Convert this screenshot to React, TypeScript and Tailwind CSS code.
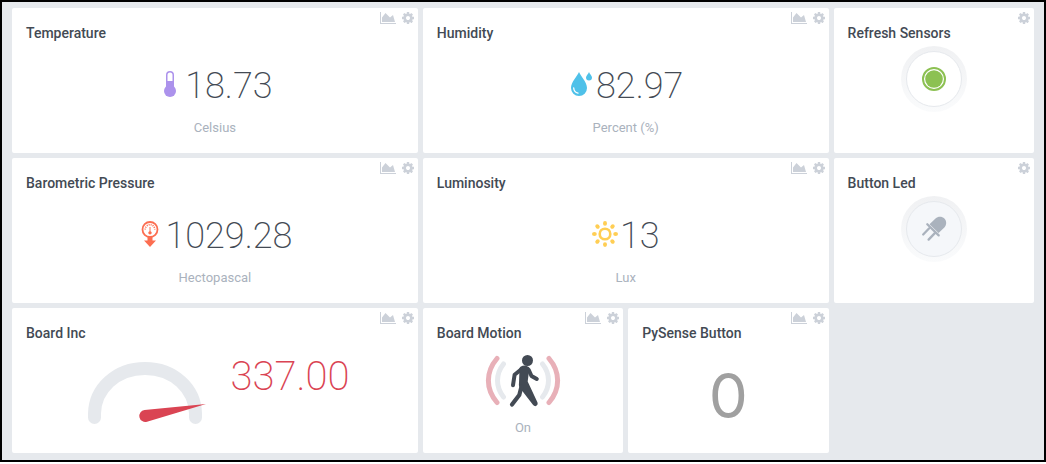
import type { ReactNode } from "react";

function AreaChartIcon() {
  return (
    <svg viewBox="0 128 2048 1536" className="h-3 w-4" fill="currentColor" aria-hidden="true">
      <path d="M2048 1536v128h-2048v-1536h128v1408h1920zM1664 512l256 896h-1664v-576l448-576 576 576z" />
    </svg>
  );
}

function CogIcon() {
  return (
    <svg viewBox="128 128 1536 1536" className="h-3 w-3" fill="currentColor" aria-hidden="true">
      <path d="M1152 896q0-106-75-181t-181-75-181 75-75 181 75 181 181 75 181-75 75-181zm512-109v222q0 12-8 23t-20 13l-185 28q-19 54-39 91 35 50 107 138 10 12 10 25t-9 23q-27 37-99 108t-94 71q-12 0-26-9l-138-108q-44 23-91 38-16 136-29 186-7 28-36 28h-222q-14 0-24.5-8.5t-11.5-21.5l-28-184q-49-16-90-37l-141 107q-10 9-25 9-14 0-25-11-126-114-165-168-7-10-7-23 0-12 8-23 15-21 51-66.5t54-70.5q-27-50-41-99l-183-27q-13-2-21-12.5t-8-23.5v-222q0-12 8-23t19-13l186-28q14-46 39-92-40-57-107-138-10-12-10-24 0-10 9-23 26-36 98.5-107.5t94.5-71.5q13 0 26 10l138 107q44-23 91-38 16-136 29-186 7-28 36-28h222q14 0 24.5 8.5t11.5 21.5l28 184q49 16 90 37l142-107q9-9 24-9 13 0 25 10 129 119 165 170 7 8 7 22 0 12-8 23-15 21-51 66.5t-54 70.5q26 50 41 98l183 28q13 2 21 12.5t8 23.5z" />
    </svg>
  );
}

function ThermometerIcon() {
  return (
    <svg viewBox="0 0 14 26" className="h-[26px] w-[14px]" aria-hidden="true">
      <path d="M3.75 16V4a3.25 3.25 0 0 1 6.5 0v12" fill="#fff" stroke="#ac92ec" strokeWidth="1.5" />
      <path d="M3.8 10h6.4v6.5H3.8z" fill="#ac92ec" />
      <circle cx="7" cy="20" r="6" fill="#ac92ec" />
    </svg>
  );
}

function DropsIcon() {
  return (
    <svg viewBox="0 0 23 26" className="h-[26px] w-[23px]" aria-hidden="true">
      <path d="M9 1C7.500 5 1 11 1 17a8 8 0 0 0 16 0C17 11 10.500 5 9 1z" fill="#4fc1e9" />
      <path d="M3.700 17c.2 3 1.800 4.600 4.300 5.100" fill="none" stroke="#fff" strokeWidth="1.300" strokeLinecap="round" />
      <path d="M19 1c-.6 1.900-3 3.600-3 5.600a3 3 0 0 0 6 0C22 4.600 19.600 2.900 19 1z" fill="#4fc1e9" />
    </svg>
  );
}

function BarometerIcon() {
  return (
    <svg viewBox="0 0 18 26" className="h-[26px] w-[18px]" aria-hidden="true">
      <circle cx="9" cy="8.500" r="7.500" fill="#fff" stroke="#fc6e51" strokeWidth="1.800" />
      <path d="M4.200 8.500a4.800 4.800 0 0 1 9.600 0" fill="none" stroke="#fc6e51" strokeWidth="1.600" strokeDasharray="1 1" />
      <path d="M8.500 6h1v4.200a1.700 1.700 0 1 1-1 0z" fill="#fc6e51" />
      <path d="M6.500 16h5v3.500h3.500l-6 6.500-6-6.500h3.500z" fill="#fc6e51" />
    </svg>
  );
}

const RAYS = [0, 45, 90, 135, 180, 225, 270, 315];

function SunIcon() {
  return (
    <svg viewBox="0 0 26 26" className="h-[26px] w-[26px]" aria-hidden="true">
      <circle cx="13" cy="13" r="5.300" fill="none" stroke="#ffce54" strokeWidth="2.600" />
      {RAYS.map((angle) => (
        <ellipse key={angle} cx="13" cy="2.400" rx="2" ry="2.400" fill="#ffce54" transform={`rotate(${angle} 13 13)`} />
      ))}
    </svg>
  );
}

function LedIcon() {
  return (
    <svg viewBox="0 0 26 26" className="h-[26px] w-[26px]" aria-hidden="true">
      <path d="M8.500 8.200 14.500 2.400C17 .3 21 .2 23.400 2.600c2.400 2.400 2.300 6.400.2 8.700L17.600 17z" fill="#aab2bd" />
      <path d="M6.300 8.300 17.700 19.400M8.200 12.300l-6 6.200M13.600 17.400l-6 6.200" stroke="#aab2bd" strokeWidth="2.300" fill="none" strokeLinecap="round" />
    </svg>
  );
}

function PushIcon() {
  return (
    <svg viewBox="0 0 24 24" className="h-6 w-6" aria-hidden="true">
      <circle cx="12" cy="12" r="11" fill="#fff" stroke="#8cc152" strokeWidth="2" />
      <circle cx="12" cy="12" r="8.800" fill="#8cc152" />
    </svg>
  );
}

function Gauge() {
  return (
    <svg viewBox="0 0 118 62" className="h-[62px] w-[118px]" role="img" aria-label="Gauge">
      <path d="M6.500 55.500V51.500C7 27 28 6.500 57 6.500s50 20.500 50.500 45v4" fill="none" stroke="#e6e9ed" strokeWidth="13" strokeLinecap="round" />
      <path d="M56.500 48 118 42 59 59.700a6 6 0 1 1-2.500-11.700z" fill="#da4453" />
    </svg>
  );
}

function MotionIcon() {
  return (
    <svg viewBox="0 0 76 54" className="h-[54px] w-[76px]" fill="none" strokeLinecap="round" role="img" aria-label="Motion detected">
      <path d="M12 3.500C.5 17 .5 34 12 47.500M64 3.500c11.500 13.500 11.500 30.500 0 44" stroke="#e8b0b8" strokeWidth="5" />
      <path d="M18.500 9c-8 10-8 23 0 33M57.500 9c8 10 8 23 0 33" stroke="#e6e9ed" strokeWidth="5" />
      <circle cx="42.500" cy="5.500" r="5.500" fill="#434a54" />
      <path d="M36.500 13.500c3-1.700 6-.8 7.300 1.500l2.700 6 5.300 3" stroke="#434a54" strokeWidth="4" strokeLinejoin="round" />
      <path d="m36 14.500-6.400 5.200-1.600 10.500" stroke="#434a54" strokeWidth="4" strokeLinejoin="round" />
      <path d="M34.500 13.500c4-3 9.500-1.500 9.500 2.500l-1.300 10.500L52.500 47.500c1 2.800-2.200 5-4.400 2.600L35 33c-1-1.500-1.300-3-1-5z" fill="#434a54" />
      <path d="M36.500 31.500 34.300 40 27 49.500" stroke="#434a54" strokeWidth="4.200" strokeLinejoin="round" />
    </svg>
  );
}

type CardProps = { title: string; wide?: boolean; chart?: boolean; children: ReactNode };

function Card({ title, wide = false, chart = true, children }: CardProps) {
  return (
    <section className={`flex min-h-[145px] flex-col rounded-[2px] bg-white ${wide ? "col-span-2" : ""}`}>
      <div className="flex h-4 items-end justify-end gap-[6px] pr-1 text-[#ccd1d9]">
        {chart && (
          <button type="button" aria-label={`${title} chart`}>
            <AreaChartIcon />
          </button>
        )}
        <button type="button" aria-label={`${title} settings`}>
          <CogIcon />
        </button>
      </div>
      <h2 className="px-[14px] text-sm leading-[18px] font-medium text-[#434a54]">{title}</h2>
      {children}
    </section>
  );
}

type ReadingProps = { icon: ReactNode; value: string; unit: string };

function Reading({ icon, value, unit }: ReadingProps) {
  return (
    <div className="flex flex-col items-center">
      <div className="mt-5 flex h-12 items-center gap-[2px]">
        <span className="flex w-[26px] justify-center pb-1">{icon}</span>
        <span className="text-4xl font-extralight text-[#434a54]">{value}</span>
      </div>
      <Unit>{unit}</Unit>
    </div>
  );
}

function Unit({ children }: { children: ReactNode }) {
  return <p className="mt-2 text-center text-[13px] leading-5 text-[#aab2bd]">{children}</p>;
}

type RoundButtonProps = { label: string; pale?: boolean; children: ReactNode };

function RoundButton({ label, pale = false, children }: RoundButtonProps) {
  return (
    <div className="mt-1 flex justify-center">
      <button type="button" aria-label={label} className="rounded-full bg-linear-to-b from-[#f0f1f3] to-[#fafbfc] p-[5px]">
        <span className={`flex h-14 w-14 items-center justify-center rounded-full border border-[#e6e9ed] ${pale ? "bg-[#f5f7fa]" : "bg-white"}`}>
          {children}
        </span>
      </button>
    </div>
  );
}

export default function App() {
  return (
    <main className="border-2 border-black bg-[#e6e9ed] px-[10px] pt-[6px] pb-[7px] font-['Roboto',sans-serif]">
      <div className="grid grid-cols-5 gap-[5px]">
        <Card title="Temperature" wide>
          <Reading icon={<ThermometerIcon />} value="18.73" unit="Celsius" />
        </Card>
        <Card title="Humidity" wide>
          <Reading icon={<DropsIcon />} value="82.97" unit="Percent (%)" />
        </Card>
        <Card title="Refresh Sensors" chart={false}>
          <RoundButton label="Refresh sensors">
            <PushIcon />
          </RoundButton>
        </Card>
        <Card title="Barometric Pressure" wide>
          <Reading icon={<BarometerIcon />} value="1029.28" unit="Hectopascal" />
        </Card>
        <Card title="Luminosity" wide>
          <Reading icon={<SunIcon />} value="13" unit="Lux" />
        </Card>
        <Card title="Button Led" chart={false}>
          <RoundButton label="Toggle led" pale>
            <LedIcon />
          </RoundButton>
        </Card>
        <Card title="Board Inc" wide>
          <div className="mt-5 flex items-start justify-center gap-6 pl-2">
            <Gauge />
            <span className="text-[40px] leading-[30px] font-extralight text-[#da4453]">337.00</span>
          </div>
        </Card>
        <Card title="Board Motion">
          <div className="mt-3 flex h-14 items-center justify-center">
            <MotionIcon />
          </div>
          <Unit>On</Unit>
        </Card>
        <Card title="PySense Button">
          <p className="mt-5 text-center font-['Inter',sans-serif] text-[62px] leading-[68px] text-[#a0a0a0]">0</p>
        </Card>
      </div>
    </main>
  );
}
